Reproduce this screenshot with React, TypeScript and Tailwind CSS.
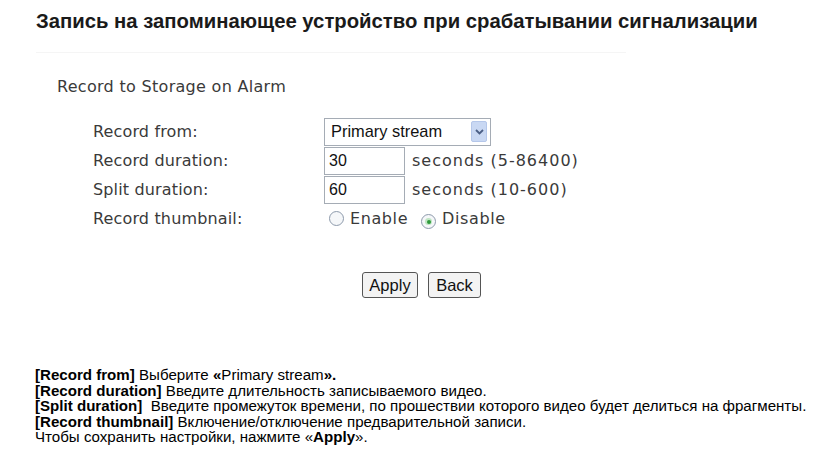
import React from "react";

const rows = [
  { label: "Record from:" },
  { label: "Record duration:" },
  { label: "Split duration:" },
  { label: "Record thumbnail:" },
];

function Radio({ checked }: { checked?: boolean }) {
  return (
    <span className="inline-flex items-center justify-center w-[15px] h-[15px] rounded-full border border-[#8d9aab] bg-[#f5f7f9]">
      {checked && (
        <span className="w-[7px] h-[7px] rounded-full bg-[#bfe5c2] flex items-center justify-center">
          <span className="w-[4px] h-[4px] rounded-full bg-[#2f9a3c]" />
        </span>
      )}
    </span>
  );
}

export default function App() {
  return (
    <main className="w-[824px] h-[455px] bg-white overflow-hidden text-[#111]">
      <h1 className="pl-[36px] pt-[8px] text-[20.3px] font-bold leading-[26px] text-[#1a1a1a] font-['Liberation_Sans',Arial,sans-serif]">
        Запись на запоминающее устройство при срабатывании сигнализации
      </h1>

      <div className="ml-[36px] mt-[18px] w-[590px] h-px bg-[#f5f5f5]" />

      <section className="pl-[57px] pt-[25px] font-['DejaVu_Sans',Verdana,sans-serif] text-[16px] tracking-[0.3px] text-[#3a3a3a]">
        <div className="leading-[18px]">Record to Storage on Alarm</div>

        <div className="mt-[21px] pl-[36px] flex">
          <div className="w-[231px] flex flex-col">
            {rows.map((r) => (
              <div key={r.label} className="h-[29px] flex items-center tracking-[0.15px]">
                {r.label}
              </div>
            ))}
          </div>

          <div className="flex flex-col">
            <div className="h-[29px] flex items-center">
              <div className="w-[167px] h-[28px] border border-[#a5acb5] bg-white flex items-center justify-between pl-[6px] pr-[3px] font-['Liberation_Sans',Arial,sans-serif] text-[16.4px] tracking-normal text-[#111]">
                <span>Primary stream</span>
                <span className="w-[16px] h-[21px] rounded-[2px] bg-[#c9d8f3] border border-[#b5c7ea] flex items-center justify-center">
                  <svg width="9" height="6" viewBox="0 0 9 6">
                    <path d="M1 1 L4.5 4.5 L8 1" fill="none" stroke="#4b5f86" strokeWidth="1.8" />
                  </svg>
                </span>
              </div>
            </div>
            <div className="h-[29px] flex items-center">
              <div className="w-[81px] h-[28px] border border-[#a5acb5] bg-white flex items-center pl-[4px] font-['Liberation_Sans',Arial,sans-serif] text-[16px] tracking-normal text-[#111]">
                30
              </div>
              <span className="ml-[7px] tracking-[1px]">seconds (5-86400)</span>
            </div>
            <div className="h-[29px] flex items-center">
              <div className="w-[81px] h-[28px] border border-[#a5acb5] bg-white flex items-center pl-[4px] font-['Liberation_Sans',Arial,sans-serif] text-[16px] tracking-normal text-[#111]">
                60
              </div>
              <span className="ml-[7px] tracking-[1px]">seconds (10-600)</span>
            </div>
            <div className="h-[29px] flex items-center pl-[5px]">
              <Radio />
              <span className="ml-[6px] tracking-[0.6px]">Enable</span>
              <span className="ml-[13px]">
                <Radio checked />
              </span>
              <span className="ml-[6px] tracking-[0.6px]">Disable</span>
            </div>
          </div>
        </div>

        <div className="mt-[39px] flex pl-[305px] gap-[10px] font-['Liberation_Sans',Arial,sans-serif] text-[16.5px] tracking-normal text-[#111]">
          <button className="w-[56px] h-[26px] rounded-[3px] border border-[#555] bg-[#f3f3f3]">Apply</button>
          <button className="w-[53px] h-[26px] rounded-[3px] border border-[#555] bg-[#f3f3f3]">Back</button>
        </div>
      </section>

      <div className="pl-[35px] pt-[69px] font-['Liberation_Sans',Arial,sans-serif] text-[15.1px] leading-[15.6px] text-black">
        <p><b>[Record from]</b> Выберите <b>«</b>Primary stream<b>».</b></p>
        <p><b>[Record duration]</b> Введите длительность записываемого видео.</p>
        <p><b>[Split duration]</b>&nbsp; Введите промежуток времени, по прошествии которого видео будет делиться на фрагменты.</p>
        <p><b>[Record thumbnail]</b> Включение/отключение предварительной записи.</p>
        <p>Чтобы сохранить настройки, нажмите «<b>Apply</b>».</p>
      </div>
    </main>
  );
}
